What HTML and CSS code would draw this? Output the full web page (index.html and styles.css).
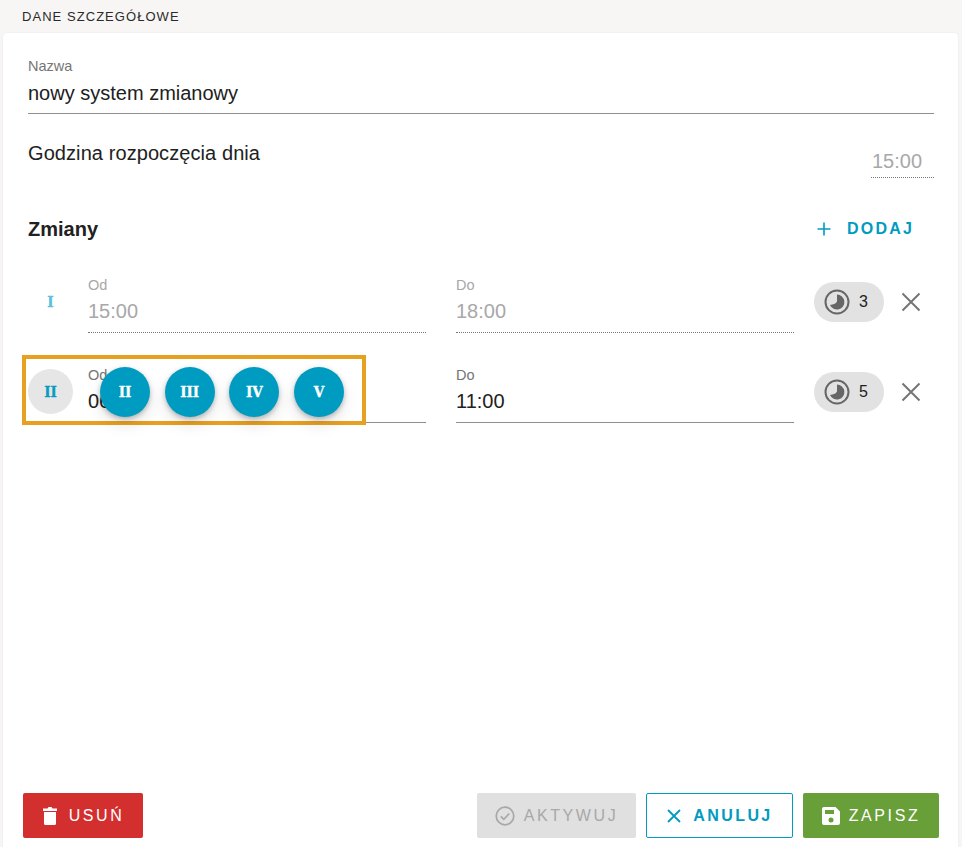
FILE: index.html
```html
<!DOCTYPE html>
<html lang="pl">
<head>
<meta charset="utf-8">
<title>Dane szczegółowe</title>
<link rel="stylesheet" href="styles.css">
</head>
<body>
<div class="page">
  <h2 class="section-title">DANE SZCZEGÓŁOWE</h2>
  <main class="card">
    <div class="field name-field">
      <div class="label">Nazwa</div>
      <div class="value">nowy system zmianowy</div>
    </div>
    <div class="start-row">
      <div class="start-label">Godzina rozpoczęcia dnia</div>
      <div class="start-time">15:00</div>
    </div>
    <div class="shifts-head">
      <h3>Zmiany</h3>
      <button class="add-btn">
        <svg width="16" height="16" viewBox="0 0 16 16"><path d="M8 1.500v13M1.500 8h13" stroke="#009bc0" stroke-width="1.600" fill="none"/></svg>
        <span>DODAJ</span>
      </button>
    </div>
    <div class="shift disabled">
      <div class="roman-slot"><span class="roman">I</span></div>
      <div class="time-field"><div class="label">Od</div><div class="value">15:00</div></div>
      <div class="time-field"><div class="label">Do</div><div class="value">18:00</div></div>
      <div class="pill">
        <svg width="26" height="26" viewBox="0 0 26 26"><circle cx="13" cy="13" r="11.500" fill="none" stroke="#666" stroke-width="2"/><path d="M13 5.500A7.500 7.500 0 1 1 6 16c3-.5 6-1 7-3.500z" fill="#666"/></svg>
        <span>3</span>
      </div>
      <svg class="close" width="20" height="20" viewBox="0 0 20 20"><path d="M1.500 1.500l17 17M18.500 1.500l-17 17" stroke="#757575" stroke-width="2" fill="none"/></svg>
    </div>
    <div class="shift active">
      <div class="roman-slot"><span class="roman circle">II</span></div>
      <div class="time-field"><div class="label">Od</div><div class="value">06:00</div></div>
      <div class="time-field"><div class="label">Do</div><div class="value">11:00</div></div>
      <div class="pill">
        <svg width="26" height="26" viewBox="0 0 26 26"><circle cx="13" cy="13" r="11.500" fill="none" stroke="#666" stroke-width="2"/><path d="M13 5.500A7.500 7.500 0 1 1 6 16c3-.5 6-1 7-3.500z" fill="#666"/></svg>
        <span>5</span>
      </div>
      <svg class="close" width="20" height="20" viewBox="0 0 20 20"><path d="M1.500 1.500l17 17M18.500 1.500l-17 17" stroke="#757575" stroke-width="2" fill="none"/></svg>
      <div class="highlight"></div>
      <div class="fabs">
        <span class="fab">II</span>
        <span class="fab">III</span>
        <span class="fab">IV</span>
        <span class="fab">V</span>
      </div>
    </div>
    <div class="actions">
      <button class="btn danger">
        <svg width="16" height="18" viewBox="0 0 16 18"><path d="M1 1.500h4.500l1-1.500h3l1 1.500H15v2.500H1zM2 5h12v11.500a1.500 1.500 0 0 1-1.500 1.500h-9A1.500 1.500 0 0 1 2 16.500z" fill="#fff"/></svg>
        <span>USUŃ</span>
      </button>
      <div class="spacer"></div>
      <button class="btn muted">
        <svg width="20" height="20" viewBox="0 0 20 20"><circle cx="10" cy="10" r="8.800" fill="none" stroke="#a8a8a8" stroke-width="1.700"/><path d="M5.800 10.300l3 3 5.500-5.800" fill="none" stroke="#a8a8a8" stroke-width="1.700"/></svg>
        <span>AKTYWUJ</span>
      </button>
      <button class="btn outline">
        <svg width="16" height="16" viewBox="0 0 16 16"><path d="M2 2l12 12M14 2L2 14" stroke="#009bc0" stroke-width="1.800" fill="none"/></svg>
        <span>ANULUJ</span>
      </button>
      <button class="btn success">
        <svg width="18" height="18" viewBox="0 0 18 18"><path fill-rule="evenodd" d="M2 0h11.500L18 4.500V16a2 2 0 0 1-2 2H2a2 2 0 0 1-2-2V2a2 2 0 0 1 2-2zM3 3v4h9V3zM9 10.500a2.500 2.500 0 1 0 0 5 2.500 2.500 0 0 0 0-5z" fill="#fff"/></svg>
        <span>ZAPISZ</span>
      </button>
    </div>
  </main>
</div>
</body>
</html>
```
FILE: styles.css
```css
* { box-sizing: border-box; }
html, body { margin: 0; height: 100%; }
body { background: #f7f6f5; font-family: "Liberation Sans", Arial, sans-serif; color: #212121; overflow: hidden; }
.page { height: 847px; display: flex; flex-direction: column; padding: 0 4px 0 3px; }
.section-title { margin: 0; height: 33px; padding: 9px 0 0 19px; font: 400 13px/16px "Liberation Sans", sans-serif; letter-spacing: 1.050px; color: #2a2a2a; }
.card { flex: 1; background: #fff; border-radius: 4px 4px 0 0; box-shadow: 0 0 2px rgba(0,0,0,.08); padding: 0 19px 9px 25px; display: flex; flex-direction: column; }
.label { font-size: 14.500px; line-height: 16px; color: #757575; }
.value { font-size: 20px; line-height: 26px; }
.name-field { margin-top: 25px; border-bottom: 1px solid #8f8f8f; height: 56px; margin-right: 5px; }
.name-field .value { margin-top: 6px; }
.start-row { display: flex; justify-content: space-between; margin-right: 5px; height: 67px; padding-top: 25px; }
.start-label { font-size: 20px; line-height: 28px; letter-spacing: .08px; }
.start-time { width: 63px; height: 39px; margin-top: 0; padding: 7px 0 0 1px; font-size: 20px; line-height: 30px; color: #a8a8a8; border-bottom: 1px dotted #777; }
.shifts-head { display: flex; justify-content: space-between; align-items: center; height: 34px; margin-top: 31px; margin-bottom: 21px; margin-right: 25px; }
.shifts-head h3 { margin: 0; font-size: 20px; font-weight: 700; color: #212121; }
.add-btn { display: flex; align-items: center; gap: 15px; padding: 0; background: none; border: 0; color: #009bc0; font: 700 16px "Liberation Sans", sans-serif; letter-spacing: 2.200px; }
.shift { position: relative; display: flex; height: 90px; margin-right: 8px; }
.roman-slot { width: 60px; height: 50px; flex: none; margin-top: 12px; }
.roman { display: flex; width: 45px; height: 45px; align-items: center; justify-content: center; font: 700 15px "DejaVu Serif Condensed", "DejaVu Serif", serif; -webkit-text-stroke: .3px currentColor; color: #5bc0da; }
.roman.circle { background: #e6e6e6; border-radius: 50%; color: #0a9bbf; }
.time-field { width: 338px; height: 57px; margin-top: 9px; margin-right: 30px; padding-top: 1px; border-bottom: 1px solid #8f8f8f; }
.time-field .value { margin-top: 5px; }
.disabled .time-field { border-bottom: 1px dotted #777; }
.disabled .label { color: #a8a8a8; }
.disabled .value { color: #a8a8a8; }
.shift .time-field:nth-child(3) { margin-right: 20px; }
.pill { width: 70px; height: 40px; flex: none; margin-top: 15px; border-radius: 20px; background: #e2e2e2; display: flex; align-items: center; gap: 9px; padding-left: 10px; font-size: 16px; color: #212121; }
.close { flex: none; margin: 25px 0 0 17px; }
.highlight { position: absolute; left: -6px; top: -2px; width: 344px; height: 70px; border: 4px solid #e8a020; pointer-events: none; }
.fabs { position: absolute; left: 72px; top: 10px; display: flex; gap: 14.670px; }
.fab { width: 50px; height: 50px; border-radius: 50%; background: #009bc0; color: #fff; display: flex; align-items: center; justify-content: center; font: 700 15px "DejaVu Serif Condensed", "DejaVu Serif", serif; -webkit-text-stroke: .3px currentColor; box-shadow: 0 2px 5px rgba(0,0,0,.26), 0 8px 16px rgba(0,0,0,.1); }
.actions { margin-top: auto; display: flex; gap: 10px; margin-left: -5px; }
.spacer { flex: 1; }
.btn { height: 45px; display: flex; align-items: center; justify-content: center; gap: 9px; border: 0; border-radius: 2px; font: 400 16px "Liberation Sans", sans-serif; letter-spacing: 2.600px; padding: 0; }
.danger { width: 120px; background: #d32f2f; color: #fff; gap: 11px; }
.muted { width: 159px; background: #e0e0e0; color: #a8a8a8; }
.outline { width: 147px; background: #fff; border: 1px solid #009bc0; color: #009bc0; font-weight: 700; letter-spacing: 2.400px; gap: 11px; }
.success { width: 136px; background: #689f38; color: #fff; }
```
